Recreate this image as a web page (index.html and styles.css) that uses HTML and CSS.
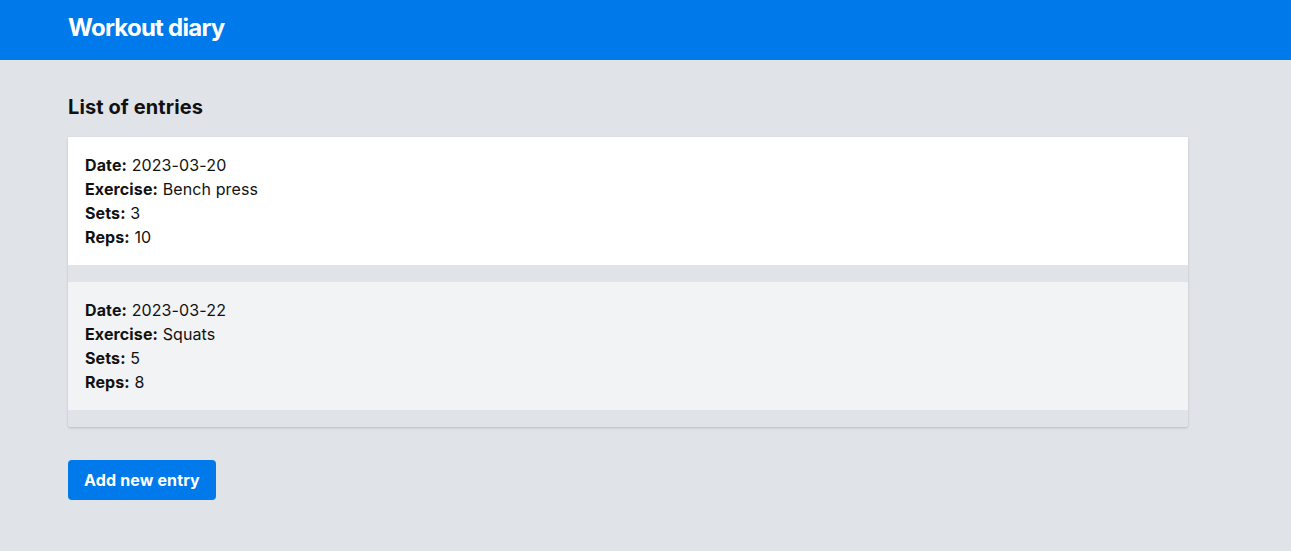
FILE: index.html
```html
<!DOCTYPE html>
<html lang="en">
<head>
<meta charset="utf-8">
<title>Workout diary</title>
<link rel="stylesheet" href="styles.css">
</head>
<body>
<header class="topbar">
  <div class="wrap">
    <h1 class="brand">Workout diary</h1>
  </div>
</header>
<main class="wrap content">
  <h2 class="section-title">List of entries</h2>
  <ul class="entries">
    <li class="entry">
      <div><b>Date:</b> 2023-03-20</div>
      <div><b>Exercise:</b> Bench press</div>
      <div><b>Sets:</b> 3</div>
      <div><b>Reps:</b> 10</div>
    </li>
    <li class="entry alt">
      <div><b>Date:</b> 2023-03-22</div>
      <div><b>Exercise:</b> Squats</div>
      <div><b>Sets:</b> 5</div>
      <div><b>Reps:</b> 8</div>
    </li>
  </ul>
  <button class="btn">Add new entry</button>
</main>
</body>
</html>
```
FILE: styles.css
```css
* { box-sizing: border-box; }
html, body { margin: 0; padding: 0; }
body {
  background: #e0e3e8;
  font-family: Inter, "Noto Sans", "Liberation Sans", sans-serif;
  color: #111;
  font-size: 16px;
  line-height: 24px;
  min-height: 551px;
}
.wrap {
  width: 1120px;
  margin-left: 68px;
}
.topbar {
  background: #007aeb;
  height: 60px;
  padding-top: 12px;
}
.brand {
  margin: 0;
  color: #fff;
  font-size: 24px;
  line-height: 32px;
  font-weight: 700;
  letter-spacing: -0.75px;
}
.content {
  padding-top: 33px;
}
.section-title {
  margin: 0 0 16px;
  font-size: 20px;
  line-height: 28px;
  font-weight: 700;
  letter-spacing: 0.1px;
}
.entries {
  display: flow-root;
  list-style: none;
  margin: 0;
  padding: 0;
  background: #e0e3e8;
  border-radius: 2px;
  box-shadow: 0 1px 3px rgba(0,0,0,0.12), 0 1px 2px rgba(0,0,0,0.06);
}
.entry {
  background: #fff;
  padding: 16px 17px;
  margin-bottom: 17px;
  letter-spacing: 0.12px;
}
.entry.alt { background: #f2f3f5; }
.entry b { font-weight: 700; }
.btn {
  display: block;
  margin-top: 33px;
  height: 40px;
  padding: 0 16px;
  background: #007aeb;
  color: #fff;
  border: 0;
  border-radius: 4px;
  font-family: inherit;
  font-size: 16px;
  font-weight: 700;
  letter-spacing: 0.15px;
}
```
